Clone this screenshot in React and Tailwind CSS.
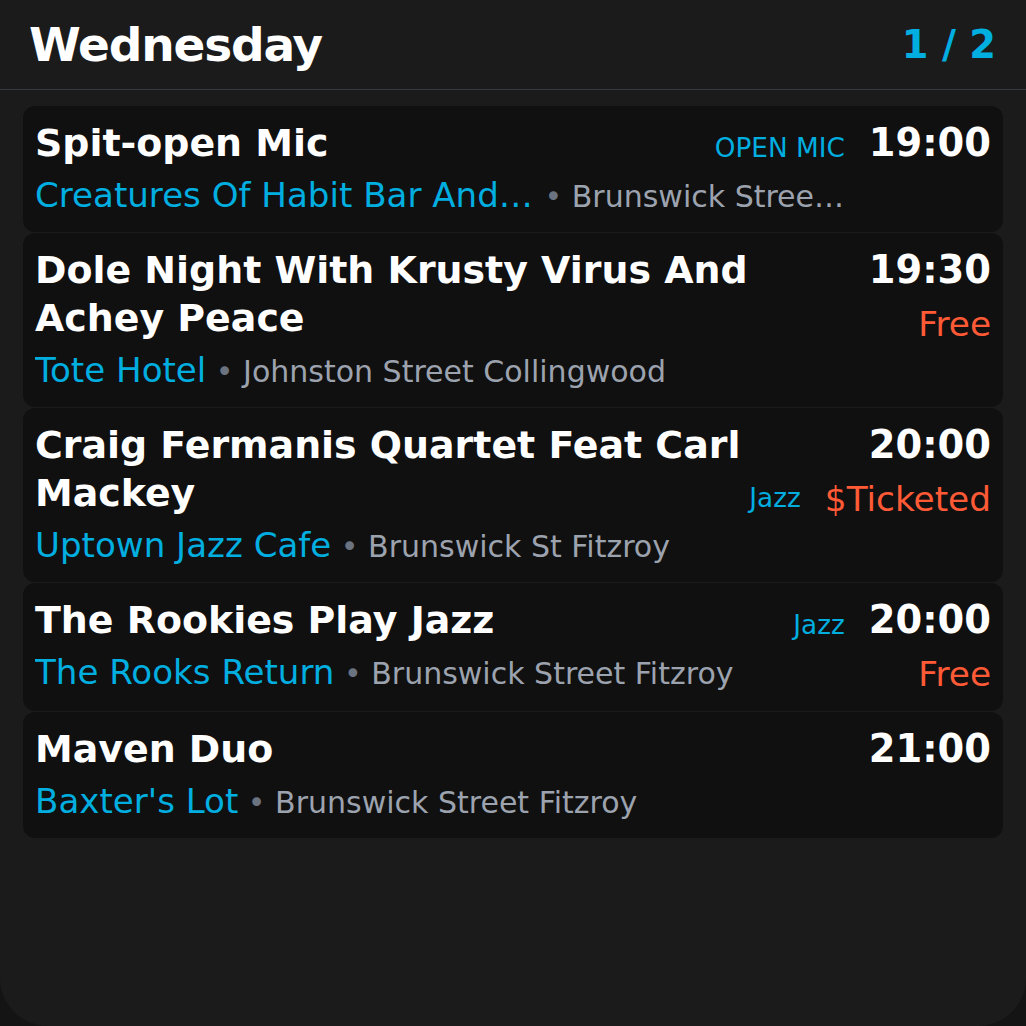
import React from "react";

const events = [
  {
    title: "Spit-open Mic",
    tag: "OPEN MIC",
    time: "19:00",
    venue: "Creatures Of Habit Bar And Restaurant",
    venueClass: "max-w-[500px] shrink-0",
    address: "Brunswick Street Fitzroy",
  },
  {
    title: "Dole Night With Krusty Virus And Achey Peace",
    time: "19:30",
    price: "Free",
    venue: "Tote Hotel",
    address: "Johnston Street Collingwood",
  },
  {
    title: "Craig Fermanis Quartet Feat Carl Mackey",
    tag: "Jazz",
    time: "20:00",
    price: "$Ticketed",
    venue: "Uptown Jazz Cafe",
    address: "Brunswick St Fitzroy",
  },
  {
    title: "The Rookies Play Jazz",
    tag: "Jazz",
    time: "20:00",
    price: "Free",
    venue: "The Rooks Return",
    address: "Brunswick Street Fitzroy",
  },
  {
    title: "Maven Duo",
    time: "21:00",
    venue: "Baxter's Lot",
    address: "Brunswick Street Fitzroy",
  },
];

function EventCard({ e }) {
  return (
    <div className="flex gap-6 rounded-[12px] bg-[#101010] px-3 py-[13px]">
      <div className="flex min-w-0 flex-1 flex-col">
        <div className="flex gap-[8px]">
          <div className="min-w-0 flex-1 text-[37.9px] font-bold leading-[48px] text-white">
            {e.title}
          </div>
          {e.tag && (
            <div className="shrink-0 self-end text-[26.3px] leading-[38px] text-[#00aee0]">
              {e.tag}
            </div>
          )}
        </div>
        <div className="mt-1 flex h-[48px] min-w-0 items-baseline">
          <span
            className={`min-w-0 truncate text-[34.1px] leading-[48px] text-[#00aee0] ${e.venueClass || ""}`}
          >
            {e.venue}
          </span>
          <span className="min-w-0 truncate text-[30px] leading-[44px] text-[#9ca3af]">
            <span className="text-[#6b7280]">{"\u00a0•\u00a0"}</span>
            {e.address}
          </span>
        </div>
      </div>
      <div className="flex shrink-0 flex-col items-end">
        <div className="text-[38.4px] font-bold leading-[48px] text-white">{e.time}</div>
        {e.price && (
          <div className="mt-[6px] text-[34.3px] leading-[48px] text-[#ff5a36]">{e.price}</div>
        )}
      </div>
    </div>
  );
}

export default function App() {
  return (
    <div
      className="h-[1026px] w-full bg-[#141414]"
      style={{ fontFamily: '"DejaVu Sans", Verdana, sans-serif' }}
    >
      <div className="flex h-full flex-col rounded-b-[48px] bg-[#1b1b1b]">
        <div className="flex items-center justify-between border-b border-[#343a44] pb-[14px] pl-[29px] pr-[30px] pt-[15px]">
          <div className="text-[47px] font-bold leading-[60px] tracking-tight text-white">
            Wednesday
          </div>
          <div className="text-[38.4px] font-bold leading-[48px] text-[#00aee0]">1 / 2</div>
        </div>
        <div className="flex flex-col gap-px px-[23px] pt-[16px]">
          {events.map((e, i) => (
            <EventCard key={i} e={e} />
          ))}
        </div>
      </div>
    </div>
  );
}
